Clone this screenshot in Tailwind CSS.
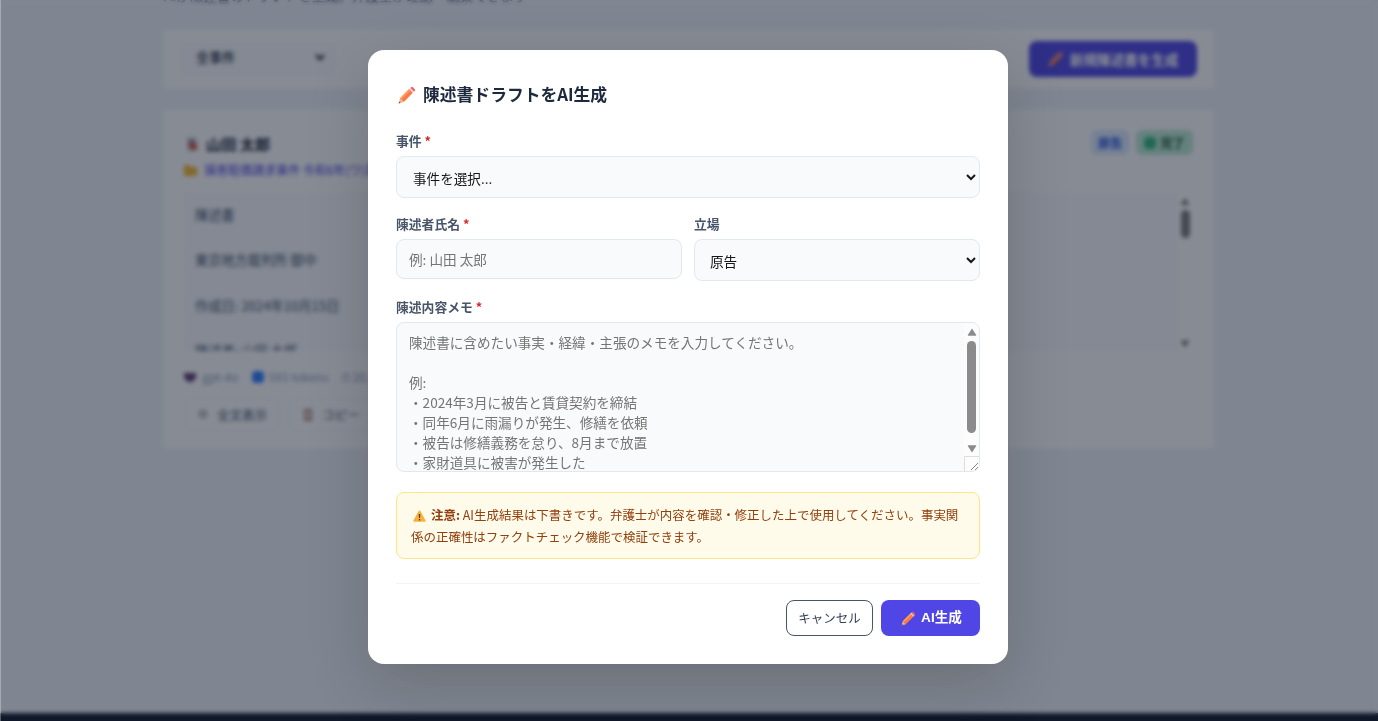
<!DOCTYPE html>
<html lang="ja">
<head>
    <meta charset="UTF-8">
    <meta name="viewport" content="width=device-width, initial-scale=1.0">
    <title>陳述書ドラフト</title>
    <script src="https://cdn.jsdelivr.net/npm/@tailwindcss/browser@4"></script>
</head>
<body class="h-screen overflow-hidden bg-slate-100 font-['Noto_Sans_CJK_JP','Noto_Sans',sans-serif] text-slate-800">
    <!-- shared icons -->
    <svg class="hidden">
        <symbol id="pencil" viewBox="0 0 18 18">
            <path d="M.6 17.400l1.500-5.200 3.700 3.700z" fill="#f3b58a"/>
            <path d="M.6 17.400l.6-2 1.400 1.400z" fill="#6b4a52"/>
            <path d="M2.100 12.200L11.200 3.100l3.700 3.700-9.100 9.100z" fill="#fb7a45"/>
            <path d="M2.100 12.200L11.200 3.100l1.300 1.300-9.100 9.100z" fill="#ff9a5c"/>
            <path d="M11.200 3.100l1.200-1.200 3.700 3.700-1.200 1.200z" fill="#e3d3dc"/>
            <path d="M12.400 1.900l.7-.7q1-.8 2 .2l1.500 1.500q1 1 .2 2l-.7.7z" fill="#f25f6b"/>
        </symbol>
    </svg>

    <div class="flex h-[721px] flex-col">
        <main class="-mt-[15px] h-[728px] shrink-0 pl-[164px]">
            <p class="h-[45px] text-[13.5px] leading-[20px] text-slate-500">AIが陳述書のドラフトを生成。弁護士が確認・編集できます</p>

            <!-- toolbar -->
            <div class="flex h-[58px] w-[1049px] items-center justify-between bg-white px-4">
                <div class="flex h-[34px] w-[156px] items-center justify-between rounded-lg bg-slate-50 pr-2.5 pb-1 pl-4 text-[13px] font-medium">
                    全事件
                    <svg class="h-3 w-3" viewBox="0 0 12 12" fill="none" stroke="#111" stroke-width="2.4"><path d="M2 4l4 4 4-4"/></svg>
                </div>
                <button class="flex h-9 w-[168px] items-center justify-center gap-1.5 rounded-lg bg-[#4f46e5] text-[13.6px] font-bold text-white">
                    <svg class="h-4 w-4"><use href="#pencil"/></svg>新規陳述書を生成
                </button>
            </div>

            <!-- statement card -->
            <div class="mt-[22px] h-[338px] w-[1049px] bg-white px-5 pt-[20px]">
                <div class="flex justify-between">
                    <div>
                        <div class="flex h-[27px] items-center gap-1.5 text-[15.2px] font-bold">
                            <svg class="h-4 w-4" viewBox="0 0 16 16"><path d="M3 1h8l2 3v11H3z" fill="#cbd5e1"/><path d="M4 8l5-3 4 3v6H6z" fill="#d0604c"/><path d="M5 4h5v2H5z" fill="#64748b"/></svg>山田 太郎
                        </div>
                        <div class="flex h-[26px] items-center gap-1.5 text-[12px] text-[#4f46e5]">
                            <svg class="h-[14px] w-[14px]" viewBox="0 0 14 14"><path d="M0 2h5l2 2h6v9H0z" fill="#f5b829"/></svg>損害賠償請求事件 令和6年(ワ)第1234号
                        </div>
                    </div>
                    <div class="flex h-[25px] gap-[7px] text-[12px] font-bold">
                        <span class="flex w-[38px] items-center justify-center rounded-md bg-blue-100 text-blue-700">原告</span>
                        <span class="flex w-[57px] items-center justify-center gap-1 rounded-md bg-[#bbebd3] text-green-900"><span class="h-3 w-3 rounded-sm bg-[#2eb87c]"></span>完了</span>
                    </div>
                </div>
                <div class="mt-[9px] flex h-[159px] w-[1009px] overflow-hidden bg-slate-50">
                    <div class="flex-1 pt-3 pl-[11px] text-[13.2px] leading-[22.7px] whitespace-pre-line text-slate-600">陳述書

                        東京地方裁判所 御中

                        作成日: 2024年10月15日

                        陳述者: 山田 太郎</div>
                    <div class="flex w-4 flex-col items-center bg-white pt-[6px] pb-[3px]">
                        <svg class="h-2 w-2.5" viewBox="0 0 10 8"><path d="M5 0l4.5 7h-9z" fill="#7b7b7b"/></svg>
                        <div class="mt-1 h-7 w-[9px] rounded-full bg-[#7b7b7b]"></div>
                        <svg class="mt-auto h-2 w-2.5" viewBox="0 0 10 8"><path d="M5 7.500L.5.5h9z" fill="#7b7b7b"/></svg>
                    </div>
                </div>
                <div class="mt-4 flex h-5 items-center text-[12px] text-slate-400">
                    <svg class="mr-1.5 h-3 w-3" viewBox="0 0 12 12"><path d="M0 2h12v5l-4 4H4L0 7z" fill="#5f3d72"/></svg>gpt-4o
                    <span class="mr-1 ml-3.5 h-3 w-3 rounded-sm bg-blue-500"></span>593 tokens
                    <span class="ml-3">⏱ 20.1s</span>
                </div>
                <div class="mt-3 flex h-[32px] gap-2 text-[12.5px] text-slate-600">
                    <div class="flex w-[96px] items-center justify-center gap-2 rounded-md border border-slate-100"><svg class="h-3 w-3" viewBox="0 0 12 12"><circle cx="6" cy="5" r="3" fill="none" stroke="#a596a8" stroke-width="2"/></svg>全文表示</div>
                    <div class="flex w-[86px] items-center justify-center gap-2 rounded-md border border-slate-100"><svg class="h-3 w-3" viewBox="0 0 12 12"><path d="M2 0h8v12H2z" fill="#bd8c7d"/><path d="M4 3h4v6H4z" fill="#e2e8f0"/></svg>コピー</div>
                </div>
            </div>
        </main>
        <footer class="h-10 shrink-0 bg-[#0f172a]"></footer>
    </div>

    <!-- modal -->
    <div class="fixed inset-0 flex items-start justify-center border-l border-white/30 bg-[#0f172a]/50 pt-[50px] pr-[3px] backdrop-blur-[2px]">
        <div class="h-[614px] w-[640px] rounded-2xl bg-white p-7 shadow-[0_20px_60px_rgba(0,0,0,0.18)]">
            <h2 class="flex h-8 items-center gap-[7px] pt-px pl-0.5 text-[16.8px] font-bold">
                <svg class="h-[18px] w-[18px]"><use href="#pencil"/></svg>陳述書ドラフトをAI生成
            </h2>

            <label class="mt-[22px] block h-[18px] text-[12.8px] leading-[18px] font-bold text-[#475569]">事件 <span class="text-[#dc2626]">*</span></label>
            <select class="mt-1.5 block h-[42px] w-full rounded-lg border border-slate-200 bg-slate-50 px-3 pt-px text-[13.6px] text-neutral-900">
                <option>事件を選択...</option>
            </select>

            <div class="mt-[17px] grid grid-cols-2 gap-3">
                <div>
                    <label class="block h-[18px] text-[12.8px] leading-[18px] font-bold text-[#475569]">陳述者氏名 <span class="text-[#dc2626]">*</span></label>
                    <input type="text" placeholder="例: 山田 太郎" class="mt-1.5 block h-10 w-full rounded-lg border border-slate-200 bg-slate-50 px-3 text-[13.6px] placeholder:text-[#757575]">
                </div>
                <div>
                    <label class="block h-[18px] text-[12.8px] leading-[18px] font-bold text-[#475569]">立場</label>
                    <select class="mt-1.5 block h-[42px] w-full rounded-lg border border-slate-200 bg-slate-50 pr-3 pl-[11px] pt-px text-[13.6px] text-neutral-900">
                        <option>原告</option>
                    </select>
                </div>
            </div>

            <label class="mt-[17px] block h-[18px] text-[12.8px] leading-[18px] font-bold text-[#475569]">陳述内容メモ <span class="text-[#dc2626]">*</span></label>
            <div class="mt-1.5 flex h-[150px] overflow-hidden rounded-lg border border-slate-200 bg-slate-50">
                <div class="flex-1 pt-[9px] pl-3 text-[13.6px] leading-5 whitespace-pre-line text-[#757575]">陳述書に含めたい事実・経緯・主張のメモを入力してください。

                    例:
                    ・2024年3月に被告と賃貸契約を締結
                    ・同年6月に雨漏りが発生、修繕を依頼
                    ・被告は修繕義務を怠り、8月まで放置
                    ・家財道具に被害が発生した</div>
                <div class="flex w-[15px] flex-col items-center bg-[#fcfcfc] pt-[5px]">
                    <svg class="h-2 w-[10px]" viewBox="0 0 10 8"><path d="M5 0.500L9.200 7q.3.700-.5.700H1.300Q.5 7.700.8 7z" fill="#8b8b8b"/></svg>
                    <div class="mt-[5px] h-[92px] w-[9px] rounded-full bg-[#8b8b8b]"></div>
                    <svg class="mt-3 h-2 w-[10px]" viewBox="0 0 10 8"><path d="M5 7.500L9.200 1q.3-.7-.5-.7H1.300Q.5.3.8 1z" fill="#8b8b8b"/></svg>
                    <svg class="mt-auto h-[15px] w-[15px] shrink-0" viewBox="0 0 15 15" fill="none"><path d="M.5 15V.5H15" stroke="#ddd"/><path d="M7 14l7-7M11 14l3-3" stroke="#888"/></svg>
                </div>
            </div>

            <div class="mt-5 h-[67px] rounded-lg border border-[#fde68a] bg-[#fffbeb] px-3.5 pt-[11px] text-[12.48px] leading-[22px] text-[#92400e]">
                <svg class="mr-[5px] ml-0.5 inline-block h-3 w-[13px] align-[-2px]" viewBox="0 0 13 12"><path d="M6.500.5q.5 0 .8.6l5.300 9.500q.4 1-.6 1.100H1q-1-.1-.6-1.100L5.700 1.100q.3-.6.8-.6z" fill="#fbb03b"/><path d="M5.700 4h1.600l-.3 4H6zM5.800 9h1.400v1.400H5.800z" fill="#4a4038"/></svg><strong>注意:</strong> AI生成結果は下書きです。弁護士が内容を確認・修正した上で使用してください。事実関係の正確性はファクトチェック機能で検証できます。
            </div>

            <div class="mt-6 flex justify-end gap-2 border-t border-slate-100 pt-4">
                <button class="h-9 w-[87px] rounded-lg border border-[#475569] bg-white text-[12.48px] text-[#334155]">キャンセル</button>
                <button class="flex h-9 w-[99px] items-center justify-center gap-[5px] rounded-lg bg-[#4f46e5] pt-px pl-0.5 text-[13.6px] font-bold text-white">
                    <svg class="h-[15px] w-[15px]"><use href="#pencil"/></svg><span class="font-['Liberation_Sans','Noto_Sans_CJK_JP',sans-serif]">AI生成</span>
                </button>
            </div>
        </div>
    </div>
</body>
</html>
